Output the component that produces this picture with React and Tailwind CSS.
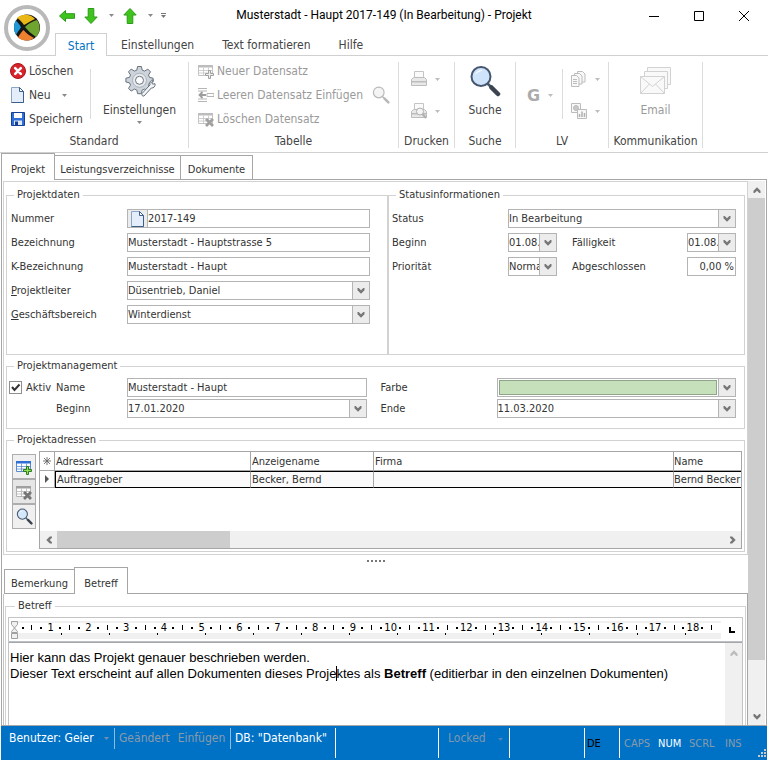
import React from 'react';

const addresses = [
  { type: 'Auftraggeber', display: 'Becker, Bernd', company: '', name: 'Bernd Becker' },
];

const rulerNumbers = Array.from({ length: 18 }, (_, i) => i + 1);
const tabStops = Array.from({ length: 14 }, (_, i) => i);

/* ---------- Icons ---------- */

const Caret = ({ className = 'text-[#8a8a8a]' }) => (
  <svg viewBox="0 0 5 3" className={`h-[3px] w-[5px] ${className}`} fill="currentColor" aria-hidden="true">
    <path d="M0 0h5L2.5 3z" />
  </svg>
);

const Chevron = ({ className = 'h-[6px] w-[8px] text-[#777777]' }) => (
  <svg viewBox="0 0 8 6" className={className} fill="currentColor" aria-hidden="true">
    <path d="M.5 0h1.200L4 2.300 6.300 0h1.200v2.200L4 5.700.5 2.200z" />
  </svg>
);

const Logo = () => (
  <svg viewBox="0 0 46 46" className="h-[46px] w-[46px]" aria-hidden="true">
    <circle cx="23" cy="23" r="21" fill="#fff" stroke="#b9b9b9" strokeWidth="4" />
    <circle cx="23" cy="22.500" r="13" fill="#161616" />
    <path d="M13 13c5-5 14-4 18 1-5 2-9 5-11 6-2-3-5-6-7-7z" fill="#e9b817" />
    <path d="M33 15c4 5 3 13-1 17-4-3-8-6-11-10 4-4 8-6 12-7z" fill="#6fa52f" />
    <path d="M11.500 15.500c2.500 1.500 4.500 4.500 5.500 7-2 2.500-4 5.500-5 7.500-2.500-4-2.500-11-.5-14.500z" fill="#1e9ad6" />
    <path d="M14 32.500c2-3.500 4-6 5.500-7.500 2.500 3 6.500 6 10.500 8-4 3.500-12 3.500-16-.5z" fill="#ee8130" />
  </svg>
);

const GreenArrow = ({ d, className }) => (
  <svg viewBox="0 0 16 16" className={className} aria-hidden="true">
    <path d={d} fill="#3fc41d" stroke="#2e9a1c" strokeWidth="1" strokeLinejoin="round" />
  </svg>
);

const DeleteIcon = () => (
  <svg viewBox="0 0 16 16" className="h-4 w-4" aria-hidden="true">
    <circle cx="8" cy="8" r="7.5" fill="#d8232a" stroke="#a8141a" />
    <path d="M5.2 5.2l5.6 5.6M10.8 5.2l-5.6 5.6" stroke="#fff" strokeWidth="2.6" strokeLinecap="round" />
  </svg>
);

const PageIcon = ({ className = 'h-4 w-4' }) => (
  <svg viewBox="0 0 16 16" className={className} aria-hidden="true">
    <path d="M1.5.5h8l4 4v11h-12z" fill="#e3eefa" stroke="#8ba5c4" />
    <path d="M13.5 4.5v11h-12" fill="none" stroke="#3c5f8a" />
    <path d="M9.5.5v4h4z" fill="#fff" stroke="#3c5f8a" strokeLinejoin="round" />
  </svg>
);

const SaveIcon = () => (
  <svg viewBox="0 0 16 16" className="h-4 w-4" aria-hidden="true">
    <path d="M1.5 1.5h13v13h-13z" fill="#2f6fd6" stroke="#153f94" strokeLinejoin="round" />
    <path d="M4 2h8v5H4z" fill="#fff" />
    <path d="M4 9.5h8V14H4z" fill="#dfe7f3" />
    <path d="M5 10.5h3V14H5z" fill="#153f94" />
  </svg>
);

const GearIcon = () => (
  <svg viewBox="0 0 32 32" className="h-8 w-8" aria-hidden="true">
    <g fill="#cdd3da" stroke="#69727d" strokeWidth="1">
      <path d="M13.6 1.5h3.8l.8 3.6 2.4 1 3.2-2 2.7 2.7-2 3.2 1 2.4 3.6.8v3.8l-3.6.8-1 2.4 2 3.2-2.7 2.7-3.2-2-2.4 1-.8 3.6h-3.8l-.8-3.6-2.4-1-3.2 2-2.7-2.7 2-3.2-1-2.4-3.6-.8v-3.8l3.6-.8 1-2.4-2-3.2 2.7-2.7 3.2 2 2.4-1z" strokeLinejoin="round" />
      <circle cx="15.5" cy="15.3" r="7" fill="#e6e9ed" stroke="#aab1ba" />
      <circle cx="15.5" cy="15.3" r="4" fill="#fff" />
      <path d="M18 28.5l8-8.6c-.8-2.4.6-5 3.4-5l-1.8 2.4 1 1.800 2.4-.4c.6 2.6-1.4 4.6-3.6 4.3l-7.400 8c-1.400.6-2.800-1-2-2.500z" fill="#f1f3f5" />
    </g>
  </svg>
);

const Lens = ({ className, rim, glass, grip }) => (
  <svg viewBox="0 0 32 32" className={className} aria-hidden="true">
    <path d="M18.5 18.5l4 4" stroke={rim} strokeWidth="2.5" />
    <path d="M22.5 22.5l6.5 6.5" stroke={grip} strokeWidth="4.5" strokeLinecap="round" />
    <circle cx="12" cy="11.5" r="9.5" fill={glass} stroke={rim} strokeWidth="2" />
    <path d="M6 10c1-4 5-5.5 8-4.5-4 .5-6 2.5-8 4.5z" fill="#fff" />
  </svg>
);

const TableIcon = ({ line, head, children }) => (
  <svg viewBox="0 0 16 16" className="h-4 w-4" aria-hidden="true">
    <path d="M.5 2.5h14v10H.5z" fill="#fff" stroke={line} />
    <path d="M0 2h15v2.5H0z" fill={head} />
    <path d="M1 7.5h13M1 10h13M5.5 4.5v8M10.5 4.5v8" stroke={line} strokeWidth=".8" />
    {children}
  </svg>
);

const Plus = ({ fill, stroke }) => (
  <path d="M10.5 7.5h2v3h3v2h-3v3h-2v-3h-3v-2h3z" fill={fill} stroke={stroke} />
);

const Cross = ({ color }) => (
  <path d="M8 8l7 7M15 8l-7 7" stroke={color} strokeWidth="2.8" />
);

const InsertRowIcon = () => (
  <svg viewBox="0 0 16 16" className="h-4 w-4" fill="none" stroke="#b5b5b5" aria-hidden="true">
    <path d="M0 1.5h9M0 14.5h9M0 4h9M0 12h9M9 6.5h7v3H9z" />
    <path d="M1 8h7M4.5 5L1.5 8l3 3" stroke="#9d9d9d" strokeWidth="1.8" />
  </svg>
);

const PrinterIcon = ({ preview }) => (
  <svg viewBox="0 0 16 16" className="h-4 w-4" aria-hidden="true">
    <path d="M3.5.5h9v7h-9z" fill="#fafafa" stroke="#c4c4c4" />
    <path d="M.5 8.5l2-2h11l2 2v6H.5z" fill="#e8e8e8" stroke="#bdbdbd" />
    <path d="M1 10h14v1.5H1z" fill="#bcbcbc" />
    {preview && (
      <>
        <circle cx="9" cy="8.500" r="3.500" fill="#f4f4f4" stroke="#b0b0b0" />
        <path d="M11.500 11l3.500 4" stroke="#b0b0b0" strokeWidth="2" />
      </>
    )}
  </svg>
);

const CopiesIcon = () => (
  <svg viewBox="0 0 16 16" className="h-4 w-4" fill="#f8f8f8" stroke="#bcbcbc" aria-hidden="true">
    <path d="M6.500.5h5l2.500 2.500v8H6.500z" />
    <path d="M3.500 2.500h5L11 5v8H3.500z" />
    <path d="M.5 4.500h5L8 7v8.500H.5z" />
    <path d="M2 8.500h4M2 10.500h4M2 12.500h4" />
  </svg>
);

const ReportIcon = () => (
  <svg viewBox="0 0 16 16" className="h-4 w-4" fill="#f8f8f8" stroke="#bcbcbc" aria-hidden="true">
    <path d="M.5.5h9v9h-9z" />
    <circle cx="5" cy="5" r="2.500" fill="#c8c8c8" />
    <path d="M6.500 6.500h9v9h-9z" />
    <path d="M8.500 11v3M11 8.500V14M13.500 10v4" stroke="#b0b0b0" strokeWidth="1.500" />
  </svg>
);

const MailIcon = () => (
  <svg viewBox="0 0 32 32" className="h-8 w-8" fill="#f9f9f9" stroke="#d2d2d2" aria-hidden="true">
    <path d="M7.5 2.500h23v17h-23z" />
    <path d="M4.500 6.500h23v17h-23z" />
    <path d="M.5 11.500h24v17H.5z" />
    <path d="M.5 11.500l12 10 12-10M.5 28.500l9-9.500M24.500 28.500l-9-9.500" fill="none" />
  </svg>
);

const Asterisk = () => (
  <svg viewBox="0 0 8 8" className="mx-auto h-2 w-2" stroke="#666" aria-hidden="true">
    <path d="M4 0v8M0 4h8M1 1l6 6M7 1L1 7" strokeWidth=".9" />
  </svg>
);

/* ---------- Form parts ---------- */

const Group = ({ title, className = '', children }) => (
  <fieldset className={`min-w-0 border border-[#d2d2d2] ${className}`}>
    <legend className="ml-[7px] px-[3px] leading-4">{title}</legend>
    {children}
  </fieldset>
);

const DropMark = () => (
  <span className="flex w-[17px] shrink-0 items-center justify-center border-l border-[#b4b4b4] bg-[#ececec]">
    <Chevron />
  </span>
);

const TextBox = ({ id, value, className = '' }) => (
  <input
    id={id}
    defaultValue={value}
    className={`h-[19px] min-w-0 border border-[#b4b4b4] bg-white outline-none ${className}`}
  />
);

const SelectBox = ({ id, value, className = '' }) => (
  <div className={`flex h-[19px] min-w-0 border border-[#b4b4b4] bg-white ${className}`}>
    <select id={id} className="min-w-0 flex-1 appearance-none overflow-hidden bg-white outline-none">
      <option>{value}</option>
    </select>
    <DropMark />
  </div>
);

const DateBox = ({ id, value, className = '' }) => (
  <div className={`flex h-[19px] min-w-0 border border-[#b4b4b4] bg-white ${className}`}>
    <input id={id} defaultValue={value} className="min-w-0 flex-1 bg-white outline-none" />
    <button className="flex shrink-0" aria-label="Kalender">
      <span className="flex h-[17px]">
        <DropMark />
      </span>
    </button>
  </div>
);

const Row = ({ id, label, hotkey, children }) => (
  <div className="flex h-[19px] items-center">
    <label htmlFor={id} className="w-[116px] shrink-0">
      {hotkey && <u>{hotkey}</u>}
      {label}
    </label>
    {children}
  </div>
);

/* ---------- Ribbon ---------- */

const RibbonGroup = ({ title, className, children }) => (
  <div className="flex">
    <div className={`flex flex-col ${className}`}>
      <div className="flex h-[72px]">{children}</div>
      <div className="flex h-[20px] items-center justify-center">{title}</div>
    </div>
    <span className="my-[3px] w-px bg-[#dcdcdc]" />
  </div>
);

const RibbonItem = ({ icon, label, drop, disabled }) => (
  <button disabled={disabled} className="flex h-6 items-center gap-[3px] whitespace-nowrap disabled:text-[#9a9a9a]">
    {icon}
    {label}
    {drop && <Caret className="ml-2 text-[#8a8a8a]" />}
  </button>
);

const DropItem = ({ icon, label }) => (
  <button disabled aria-label={label} className="flex items-center gap-2">
    {icon}
    <Caret className="text-[#bdbdbd]" />
  </button>
);

const Header = () => (
  <header className="flex border-b border-[#d0d0d0] pl-1">
    <button aria-label="Anwendungsmenü" className="mt-[5px] h-[46px] shrink-0">
      <Logo />
    </button>
    <div className="flex min-w-0 flex-1 flex-col">
      <div className="flex h-[33px] items-center pb-[2px]">
        <div className="flex w-[120px] shrink-0 items-center pl-[9px]">
          <button aria-label="Zurück">
            <GreenArrow className="h-4 w-4" d="M.5 8l6-5.500v3.200h9v4.600h-9v3.200z" />
          </button>
          <button aria-label="Nach unten" className="ml-2 flex items-center gap-[10px]">
            <GreenArrow className="h-4 w-4" d="M8 15.500L1.800 9h3.400V.5h5.600V9h3.400z" />
            <Caret />
          </button>
          <button aria-label="Nach oben" className="ml-2 flex items-center gap-[10px]">
            <GreenArrow className="h-4 w-4" d="M8 .5L1.800 7h3.400v8.500h5.600V7h3.400z" />
            <Caret />
          </button>
          <button aria-label="Schnellzugriff anpassen" className="ml-2 flex flex-col items-center gap-[1px]">
            <span className="h-px w-[5px] bg-[#777]" />
            <Caret className="text-[#777]" />
          </button>
        </div>
        <h1 className="min-w-0 flex-1 truncate text-center font-['Roboto',sans-serif] text-[12px] text-black">
          Musterstadt - Haupt 2017-149 (In Bearbeitung) - Projekt
        </h1>
        <div className="flex w-[170px] shrink-0 items-center justify-end gap-[35px] pr-[19px]">
          <button aria-label="Minimieren">
            <svg viewBox="0 0 10 10" className="h-[10px] w-[10px]" stroke="#000"><path d="M0 5.5h10" /></svg>
          </button>
          <button aria-label="Maximieren">
            <svg viewBox="0 0 10 10" className="h-[10px] w-[10px]" fill="none" stroke="#000"><path d="M.5.5h9v9h-9z" /></svg>
          </button>
          <button aria-label="Schließen">
            <svg viewBox="0 0 10 10" className="h-[10px] w-[10px]" stroke="#000"><path d="M0 0l10 10M10 0L0 10" /></svg>
          </button>
        </div>
      </div>
      <nav className="flex h-[22px] items-stretch pl-[5px] text-[12px] text-[#444]">
        <button className="-mb-px w-[52px] border border-b-0 border-[#d0d0d0] bg-white pt-[2px] text-[#0072c6]">Start</button>
        <button className="ml-[14px] pt-[3px]">Einstellungen</button>
        <button className="ml-7 pt-[3px]">Text formatieren</button>
        <button className="ml-7 pt-[3px]">Hilfe</button>
      </nav>
    </div>
  </header>
);

const Ribbon = () => (
  <div className="flex overflow-hidden border-b border-[#d0d0d0] pt-[3px] pb-px text-[12px] text-[#444]">
    <RibbonGroup title="Standard" className="w-[188px]">
      <div className="w-[90px] shrink-0 pl-[10px]">
        <RibbonItem icon={<DeleteIcon />} label="Löschen" />
        <RibbonItem icon={<PageIcon />} label="Neu" drop />
        <RibbonItem icon={<SaveIcon />} label="Speichern" />
      </div>
      <span className="mt-[10px] h-[50px] w-px bg-[#dcdcdc]" />
      <button className="flex flex-1 flex-col items-center pt-[6px]">
        <GearIcon />
        <span className="mt-[3px] leading-5">Einstellungen</span>
        <Caret className="mt-[1px] text-[#8a8a8a]" />
      </button>
    </RibbonGroup>

    <RibbonGroup title="Tabelle" className="w-[209px]">
      <div className="w-[174px] shrink-0 pl-[9px]">
        <RibbonItem disabled icon={<TableIcon line="#c4c4c4" head="#bdbdbd"><Plus fill="#eee" stroke="#a0a0a0" /></TableIcon>} label="Neuer Datensatz" />
        <RibbonItem disabled icon={<InsertRowIcon />} label="Leeren Datensatz Einfügen" />
        <RibbonItem disabled icon={<TableIcon line="#c4c4c4" head="#bdbdbd"><Cross color="#a0a0a0" /></TableIcon>} label="Löschen Datensatz" />
      </div>
      <button disabled aria-label="Datensatz suchen" className="pl-[9px]">
        <Lens className="h-[18px] w-[18px]" rim="#b8b8b8" glass="#f4f4f4" grip="#b8b8b8" />
      </button>
    </RibbonGroup>

    <RibbonGroup title="Drucken" className="w-[55px]">
      <div className="flex flex-col gap-4 pt-3 pl-3">
        <DropItem icon={<PrinterIcon />} label="Drucken" />
        <DropItem icon={<PrinterIcon preview />} label="Vorschau" />
      </div>
    </RibbonGroup>

    <RibbonGroup title="Suche" className="w-[60px]">
      <button className="flex flex-1 flex-col items-center pt-[6px]">
        <Lens className="h-8 w-8" rim="#46566e" glass="#cfe4fa" grip="#3c4450" />
        <span className="mt-[3px] leading-5">Suche</span>
      </button>
    </RibbonGroup>

    <RibbonGroup title="LV" className="w-[92px]">
      <button disabled className="flex w-[46px] shrink-0 items-center gap-2 pl-[11px] font-['DejaVu_Sans',sans-serif] text-[16px] font-bold text-[#ababab]">
        G
        <Caret className="text-[#bdbdbd]" />
      </button>
      <span className="mt-[10px] h-[50px] w-px bg-[#dcdcdc]" />
      <div className="flex flex-col gap-4 pt-3 pl-2">
        <DropItem icon={<CopiesIcon />} label="Kopieren" />
        <DropItem icon={<ReportIcon />} label="Auswertung" />
      </div>
    </RibbonGroup>

    <RibbonGroup title="Kommunikation" className="w-[93px]">
      <button disabled className="flex flex-1 flex-col items-center pt-[6px] text-[#9a9a9a]">
        <MailIcon />
        <span className="mt-[3px] leading-5">Email</span>
      </button>
    </RibbonGroup>
  </div>
);

/* ---------- Project page ---------- */

const ProjectData = () => (
  <Group title="Projektdaten" className="pb-[30px]">
    <div className="flex flex-col gap-[5px] pt-[6px] pr-[17px] pl-1">
      <Row id="nummer" label="Nummer">
        <div className="flex h-[19px] min-w-0 flex-1 border border-[#b4b4b4] bg-white">
          <button aria-label="Nummer vergeben" className="flex w-5 shrink-0 items-center justify-center border-r border-[#b4b4b4] bg-[#ececec]">
            <PageIcon />
          </button>
          <input id="nummer" defaultValue="2017-149" className="min-w-0 flex-1 outline-none" />
        </div>
      </Row>
      <Row id="bezeichnung" label="Bezeichnung">
        <TextBox id="bezeichnung" value="Musterstadt - Hauptstrasse 5" className="flex-1" />
      </Row>
      <Row id="kbez" label="K-Bezeichnung">
        <TextBox id="kbez" value="Musterstadt - Haupt" className="flex-1" />
      </Row>
      <Row id="leiter" hotkey="P" label="rojektleiter">
        <SelectBox id="leiter" value="Düsentrieb, Daniel" className="flex-1" />
      </Row>
      <Row id="bereich" hotkey="G" label="eschäftsbereich">
        <SelectBox id="bereich" value="Winterdienst" className="flex-1" />
      </Row>
    </div>
  </Group>
);

const StatusInfo = () => (
  <Group title="Statusinformationen">
    <div className="flex flex-col gap-[5px] pt-[6px] pr-2 pl-[3px]">
      <Row id="status" label="Status">
        <SelectBox id="status" value="In Bearbeitung" className="flex-1" />
      </Row>
      <Row id="beginn" label="Beginn">
        <DateBox id="beginn" value="01.08.2017" className="w-[49px]" />
        <label htmlFor="faellig" className="ml-[15px] flex-1">Fälligkeit</label>
        <DateBox id="faellig" value="01.08.2017" className="w-[49px]" />
      </Row>
      <Row id="prio" label="Priorität">
        <SelectBox id="prio" value="Normal" className="w-[49px]" />
        <label htmlFor="fertig" className="ml-[15px] flex-1">Abgeschlossen</label>
        <TextBox id="fertig" value="0,00 %" className="w-[49px] pr-[1px] text-right" />
      </Row>
    </div>
  </Group>
);

const Management = () => (
  <Group title="Projektmanagement" className="pb-[10px]">
    <div className="flex pt-1 pr-2 pl-[2px]">
      <label className="flex h-[19px] w-[47px] shrink-0 items-center gap-1">
        <span className="grid">
          <input
            type="checkbox"
            defaultChecked
            className="peer col-start-1 row-start-1 h-[13px] w-[13px] appearance-none border border-[#8f8f8f] bg-white"
          />
          <svg viewBox="0 0 13 13" className="pointer-events-none invisible col-start-1 row-start-1 h-[13px] w-[13px] peer-checked:visible" fill="none" stroke="#333" strokeWidth="2">
            <path d="M3 6l2.500 3L10.500 3.500" />
          </svg>
        </span>
        Aktiv
      </label>
      <div className="flex flex-1 flex-col gap-[2px]">
        <div className="flex h-[19px] items-center">
          <label htmlFor="pmname" className="w-[71px] shrink-0">Name</label>
          <div className="flex min-w-0 flex-1">
            <TextBox id="pmname" value="Musterstadt - Haupt" className="w-full" />
          </div>
          <label htmlFor="farbe" className="ml-[14px] w-[116px] shrink-0">Farbe</label>
          <div className="flex min-w-0 flex-1">
            <div className="flex h-[19px] w-full border border-[#b4b4b4]">
              <select id="farbe" className="m-[1px] min-w-0 flex-1 appearance-none border border-[#8fa58a] bg-[#c6e0bc] text-transparent outline-none">
                <option aria-label="Hellgrün" />
              </select>
              <DropMark />
            </div>
          </div>
        </div>
        <div className="flex h-[19px] items-center">
          <label htmlFor="pmbeginn" className="w-[71px] shrink-0">Beginn</label>
          <DateBox id="pmbeginn" value="17.01.2020" className="flex-1" />
          <label htmlFor="pmende" className="ml-[14px] w-[116px] shrink-0">Ende</label>
          <DateBox id="pmende" value="11.03.2020" className="flex-1" />
        </div>
      </div>
    </div>
  </Group>
);

const Addresses = () => (
  <Group title="Projektadressen" className="pb-[2px]">
    <div className="flex gap-[3px] pt-[3px] pr-[2px] pl-[5px]">
      <div className="flex w-6 shrink-0 flex-col pt-[3px]">
        <button aria-label="Adresse hinzufügen" className="flex h-[25px] items-center justify-center border border-[#adadad] bg-[#f0f0f0]">
          <TableIcon line="#5a8bd0" head="#2f6fd6"><Plus fill="#8fe05a" stroke="#2c7a1c" /></TableIcon>
        </button>
        <button aria-label="Adresse löschen" className="flex h-[25px] items-center justify-center border border-[#adadad] bg-[#e6e6e6]">
          <TableIcon line="#b4b4b4" head="#a0a0a0"><Cross color="#757575" /></TableIcon>
        </button>
        <button aria-label="Adresse suchen" className="flex h-[25px] items-center justify-center border border-[#adadad] bg-[#f0f0f0]">
          <Lens className="h-[17px] w-[17px]" rim="#46566e" glass="#d4e8fb" grip="#3c4450" />
        </button>
      </div>
      <div className="flex h-[98px] min-w-0 flex-1 flex-col justify-between overflow-hidden border border-[#a6a6a6]">
        <table className="w-full table-fixed border-separate border-spacing-0 text-left">
          <colgroup>
            <col className="w-[15px]" />
            <col className="w-[196px]" />
            <col className="w-[123px]" />
            <col className="w-[300px]" />
            <col />
          </colgroup>
          <thead>
            <tr className="h-[19px]">
              <th className="border-r border-b border-[#a6a6a6]" aria-label="Neu">
                <Asterisk />
              </th>
              <th className="border-r border-b border-[#a6a6a6] pl-[1px] font-normal">Adressart</th>
              <th className="border-r border-b border-[#a6a6a6] pl-[1px] font-normal">Anzeigename</th>
              <th className="border-r border-b border-[#a6a6a6] pl-[1px] font-normal">Firma</th>
              <th className="border-b border-[#a6a6a6] font-normal">Name</th>
            </tr>
          </thead>
          <tbody>
            {addresses.map((a) => (
              <tr key={a.name} className="h-[17px] whitespace-nowrap">
                <td className="border-r border-b border-[#a6a6a6]">
                  <svg viewBox="0 0 4 8" className="mx-auto h-2 w-1" fill="#555" aria-hidden="true">
                    <path d="M0 0l4 4-4 4z" />
                  </svg>
                </td>
                <td className="border-y border-r border-l border-y-black border-r-[#a6a6a6] border-l-black bg-[#fafafa] pl-[1px] leading-[15px]">{a.type}</td>
                <td className="border-y border-r border-y-black border-r-[#a6a6a6] bg-[#fafafa] pl-[1px] leading-[15px]">{a.display}</td>
                <td className="border-y border-r border-y-black border-r-[#a6a6a6] bg-[#fafafa] pl-[1px] leading-[15px]">{a.company}</td>
                <td className="border-y border-y-black bg-[#fafafa] leading-[15px]">{a.name}</td>
              </tr>
            ))}
          </tbody>
        </table>
        <div className="flex h-[17px] items-center bg-[#f0f0f0]">
          <button aria-label="Nach links" className="flex w-[17px] justify-center">
            <Chevron className="h-[6px] w-[8px] rotate-90 text-[#777777]" />
          </button>
          <span className="h-[17px] w-[173px] bg-[#cdcdcd]" />
          <span className="flex-1" />
          <button aria-label="Nach rechts" className="flex w-[17px] justify-center">
            <Chevron className="h-[6px] w-[8px] -rotate-90 text-[#777777]" />
          </button>
        </div>
      </div>
    </div>
  </Group>
);

const Ruler = () => (
  <div className="flex h-[24px] items-center border-b border-[#b9c0c9] pl-[2px] text-black">
    <div className="flex h-[18px] min-w-0 flex-1 flex-col overflow-hidden bg-[#f0f0f0] pt-[2px]">
      <div className="flex h-[10px] items-center bg-white">
        <svg viewBox="0 0 8 18" className="h-[18px] w-2 shrink-0 self-start overflow-visible" fill="#f0f0f0" stroke="#a0a0a0" aria-hidden="true">
          <path d="M.5-1.5h6v3l-3 3.500-3-3.500zM.5 8.500l3-3.500 3 3.500v1h-6zM.5 10.500h6v5h-6z" />
        </svg>
        <span className="ml-[3px] h-[2px] w-[2px] shrink-0 bg-black" />
        {/* each centimetre: half mark, quarter dot, number, quarter dot */}
        <div className="ml-[3px] flex w-[680px] shrink-0">
          {rulerNumbers.map((n) => (
            <div key={n} className="grid flex-1 grid-cols-4 items-center justify-items-center">
              <span className="h-[5px] w-px bg-black" />
              <span className="h-[2px] w-[2px] bg-black" />
              <span className="flex w-full justify-center leading-[10px]">
                <span>{n}</span>
              </span>
              <span className="h-[2px] w-[2px] bg-black" />
            </div>
          ))}
        </div>
        <span className="ml-1 h-[5px] w-px shrink-0 bg-black" />
      </div>
      <div className="flex pl-[3px]">
        {tabStops.map((t) => (
          <span key={t} className="flex w-12 shrink-0 justify-end">
            <span className="h-[2px] w-px bg-black" />
          </span>
        ))}
      </div>
    </div>
    <button aria-label="Tabulator" className="flex w-[21px] shrink-0 justify-center">
      <svg viewBox="0 0 6 6" className="h-[6px] w-[6px]" fill="#000"><path d="M0 0h2v4h4v2H0z" /></svg>
    </button>
  </div>
);

const SubjectPanel = () => (
  <div className="flex flex-1 flex-col border-r border-l border-[#a6a6a6] border-l-[#c4c4c4] pt-1 pr-[1px] pl-[1px]">
    <fieldset className="flex min-w-0 flex-1 flex-col border border-b-0 border-[#d2d2d2] px-[2px]">
      <legend className="ml-[7px] px-[3px] leading-4">Betreff</legend>
      <div className="mt-[3px] flex flex-1 flex-col border border-b-0 border-[#c4c4c4]">
        <Ruler />
        <div className="flex flex-1 border-t border-[#a6a6a6]">
          <div
            role="textbox"
            aria-label="Betreff"
            contentEditable
            suppressContentEditableWarning
            className="flex-1 pt-[7px] pl-[1px] font-['Liberation_Sans',sans-serif] text-[13px] leading-4 text-black outline-none"
          >
            <p>Hier kann das Projekt genauer beschrieben werden.</p>
            <p>
              Dieser Text erscheint auf allen Dokumenten dieses Proje
              <span className="-mr-px border-l border-black" />
              ktes als <b>Betreff</b> (editierbar in den einzelnen Dokumenten)
            </p>
          </div>
          <div className="flex w-[17px] shrink-0 justify-center bg-[#f0f0f0] pt-[7px]">
            <Chevron className="h-[6px] w-[8px] rotate-180 text-[#bcbcbc]" />
          </div>
        </div>
      </div>
    </fieldset>
  </div>
);

const PageScrollbar = () => (
  <div className="mt-[1px] mr-[1px] flex w-[17px] shrink-0 flex-col bg-[#f0f0f0]">
    <button aria-label="Nach oben" className="flex h-[17px] items-center justify-center">
      <Chevron className="h-[6px] w-[8px] rotate-180 text-[#777777]" />
    </button>
    <span className="flex-[460] bg-[#cdcdcd]" />
    <span className="flex-[48]" />
    <button aria-label="Nach unten" className="flex h-[17px] items-center justify-center">
      <Chevron />
    </button>
  </div>
);

const StatusBar = () => (
  <footer className="mx-px mb-px flex h-[34px] items-start bg-[#0072c6] pt-[2px] text-[12px] whitespace-nowrap text-white">
    <div className="flex h-[21px] flex-1 items-center pl-2">
      <span className="flex w-[105px] items-center justify-between pr-[5px]">
        Benutzer: Geier
        <Caret className="text-[#6f8fae]" />
      </span>
      <span className="flex h-[21px] w-[117px] items-center gap-2 border-x border-[#8dbbe2] pl-1 text-[#8a9aa9]">
        <span>Geändert</span>
        <span>Einfügen</span>
      </span>
      <span className="pl-1">DB: "Datenbank"</span>
    </div>
    <div className="h-[30px] w-[103px] border-l border-white" />
    <div className="flex h-[30px] w-[71px] justify-between border-l border-white pr-[6px] pl-[9px] text-[#7f97ad]">
      <span className="leading-[21px]">Locked</span>
      <Caret className="mt-[10px] text-[#4f86b8]" />
    </div>
    <div className="h-[30px] w-[75px] border-l border-white" />
    <div className="h-[30px] w-[35px] border-l border-white pl-[2px] text-[11px] leading-[31px] text-black">DE</div>
    <div className="flex h-[30px] w-[148px] border-l border-white pl-1 text-[11px] leading-[31px] text-[#8a9aa9]">
      <span className="w-[34px]">CAPS</span>
      <span className="w-[31px] text-white">NUM</span>
      <span className="w-[36px]">SCRL</span>
      <span className="flex-1">INS</span>
      <svg viewBox="0 0 9 9" className="h-[9px] w-[9px] self-end" fill="#c9c9c9" aria-hidden="true">
        <path d="M6 0h2v2H6zM3 3h2v2H3zM6 3h2v2H6zM0 6h2v2H0zM3 6h2v2H3zM6 6h2v2H6z" />
      </svg>
    </div>
  </footer>
);

export default function App() {
  return (
    <div className="flex min-h-screen flex-col bg-white font-['DejaVu_Sans_Condensed','DejaVu_Sans',sans-serif] text-[11px] leading-[17px] text-[#333]">
      <Header />
      <Ribbon />
      <main className="mx-px flex flex-1 flex-col">
        <nav className="flex h-[27px] items-end">
          <button className="h-[27px] w-[54px] border border-b-0 border-[#a6a6a6] pt-1">Projekt</button>
          <button className="h-[25px] w-[126px] border-t border-r border-b border-[#a6a6a6] pt-1">Leistungsverzeichnisse</button>
          <button className="h-[25px] w-[72px] border-t border-r border-b border-[#a6a6a6] pt-1">Dokumente</button>
          <span className="h-px flex-1 bg-[#a6a6a6]" />
        </nav>
        <div className="flex flex-1 border-r border-b border-l border-[#a6a6a6]">
          <div className="flex min-w-0 flex-1 flex-col pl-[1px]">
            <div className="mt-[1px] border border-[#d2d2d2] px-[2px] pt-[5px] pb-[2px]">
              <div className="grid grid-cols-[382fr_357fr]">
                <ProjectData />
                <StatusInfo />
              </div>
              <div className="mt-[3px]">
                <Management />
              </div>
              <div className="mt-[3px]">
                <Addresses />
              </div>
            </div>
            <div className="flex h-[12px] items-center justify-center gap-[2px]">
              {[0, 1, 2, 3, 4].map((i) => (
                <span key={i} className="h-[2px] w-[2px] bg-[#777]" />
              ))}
            </div>
            <nav className="flex h-[27px] items-end pl-[1px]">
              <button className="h-[25px] w-[70px] border border-r-0 border-[#a6a6a6] pt-1">Bemerkung</button>
              <button className="h-[27px] w-[54px] border border-b-0 border-[#a6a6a6] pt-1">Betreff</button>
              <span className="h-px flex-1 bg-[#a6a6a6]" />
            </nav>
            <SubjectPanel />
          </div>
          <PageScrollbar />
        </div>
      </main>
      <StatusBar />
    </div>
  );
}
